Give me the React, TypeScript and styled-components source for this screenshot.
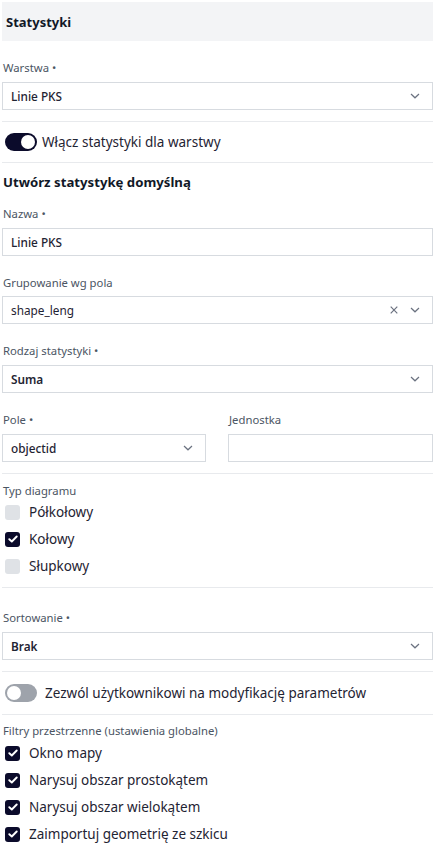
import React from "react";
import styled, { createGlobalStyle } from "styled-components";

const Global = createGlobalStyle`
  html, body { margin: 0; padding: 0; background: #fff; }
  body { font-family: "Segoe UI", "Noto Sans", "Open Sans", sans-serif; color: #1c1f33; }
  * { box-sizing: border-box; }
`;

const Page = styled.div`
  width: 443px;
  padding: 2px 10px 0 2px;
  display: flex;
  flex-direction: column;
`;

const Header = styled.div`
  height: 39px;
  background: #f3f4f6;
  display: flex;
  align-items: center;
  padding-left: 4px;
  font-size: 13px;
  font-weight: 700;
  color: #111827;
`;

const Field = styled.div<{ $mt?: number }>`
  display: flex;
  flex-direction: column;
  margin-top: ${(p) => p.$mt ?? 0}px;
`;

const Label = styled.div<{ $mb?: number }>`
  font-size: 11.3px;
  color: #4b5563;
  height: 18px;
  line-height: 18px;
  padding-left: 1px;
  margin-bottom: ${(p) => p.$mb ?? 5}px;
`;

const Box = styled.div<{ $weight?: number }>`
  height: 28px;
  border: 1px solid #d7dbe0;
  display: flex;
  align-items: center;
  padding: 0 12px 0 8px;
  font-size: 11.8px;
  font-weight: ${(p) => p.$weight ?? 400};
  color: #1f2433;
`;

const BoxText = styled.span`
  flex: 1;
`;

const Divider = styled.div<{ $my: number; $mb?: number }>`
  height: 1px;
  background: #e8eaed;
  margin-top: ${(p) => p.$my}px;
  margin-bottom: ${(p) => p.$mb ?? p.$my}px;
`;

const ToggleRow = styled.div`
  display: flex;
  align-items: center;
  gap: 5px;
  padding-left: 3px;
  height: 20px;
`;

const Track = styled.div<{ $on: boolean }>`
  width: 32px;
  height: 18px;
  border-radius: 9px;
  background: ${(p) => (p.$on ? "#0b0b2b" : "#9ea3ab")};
  display: flex;
  align-items: center;
  justify-content: ${(p) => (p.$on ? "flex-end" : "flex-start")};
  padding: 0 2px;
`;

const Knob = styled.div`
  width: 14px;
  height: 14px;
  border-radius: 50%;
  background: #fff;
`;

const ToggleText = styled.span<{ $gap?: number }>`
  font-size: 13.5px;
  color: #1f2433;
  margin-left: ${(p) => p.$gap ?? 0}px;
`;

const Section = styled.div`
  font-size: 13.2px;
  font-weight: 700;
  color: #111827;
  padding-left: 1px;
  height: 20px;
  line-height: 20px;
`;

const Row2 = styled.div`
  display: grid;
  grid-template-columns: 204px 205px;
  column-gap: 22px;
`;

const CheckList = styled.div`
  display: flex;
  flex-direction: column;
  gap: 7px;
  padding-left: 3px;
`;

const CheckRow = styled.div`
  display: flex;
  align-items: center;
  gap: 9px;
  height: 20px;
`;

const CheckBox = styled.div<{ $on: boolean }>`
  width: 15px;
  height: 15px;
  border-radius: 3px;
  background: ${(p) => (p.$on ? "#0b0b2b" : "#dfe2e6")};
  display: flex;
  align-items: center;
  justify-content: center;
`;

const CheckText = styled.span`
  font-size: 13.5px;
  color: #1f2433;
`;

const Chevron = () => (
  <svg width="10" height="6" viewBox="0 0 10 6" fill="none">
    <path d="M1 1L5 4.8L9 1" stroke="#6b7280" strokeWidth="1.2" />
  </svg>
);

const Cross = () => (
  <svg width="8" height="8" viewBox="0 0 8 8" fill="none" style={{ marginRight: 12 }}>
    <path d="M0.7 0.7L7.3 7.3M7.3 0.7L0.7 7.3" stroke="#6b7280" strokeWidth="1.2" />
  </svg>
);

const Tick = () => (
  <svg width="10" height="8" viewBox="0 0 10 8" fill="none">
    <path d="M1.3 4.2L3.8 6.5L8.7 1.5" stroke="#fff" strokeWidth="1.9" strokeLinecap="round" strokeLinejoin="round" />
  </svg>
);

const Check = ({ on, label }: { on: boolean; label: string }) => (
  <CheckRow>
    <CheckBox $on={on}>{on && <Tick />}</CheckBox>
    <CheckText>{label}</CheckText>
  </CheckRow>
);

export default function App() {
  return (
    <>
      <Global />
      <Page>
        <Header>Statystyki</Header>
        <Field $mt={18}>
          <Label>Warstwa •</Label>
          <Box $weight={500}>
            <BoxText>Linie PKS</BoxText>
            <Chevron />
          </Box>
        </Field>
        <Divider $my={11} $mb={10} />
        <ToggleRow>
          <Track $on>
            <Knob />
          </Track>
          <ToggleText>Włącz statystyki dla warstwy</ToggleText>
        </ToggleRow>
        <Divider $my={10} $mb={9} />
        <Section>Utwórz statystykę domyślną</Section>
        <Field $mt={13}>
          <Label>Nazwa •</Label>
          <Box $weight={500}>
            <BoxText>Linie PKS</BoxText>
          </Box>
        </Field>
        <Field $mt={18}>
          <Label $mb={4}>Grupowanie wg pola</Label>
          <Box>
            <BoxText>shape_leng</BoxText>
            <Cross />
            <Chevron />
          </Box>
        </Field>
        <Field $mt={18}>
          <Label>Rodzaj statystyki •</Label>
          <Box $weight={600}>
            <BoxText>Suma</BoxText>
            <Chevron />
          </Box>
        </Field>
        <Row2>
          <Field $mt={18}>
            <Label>Pole •</Label>
            <Box $weight={500}>
              <BoxText>objectid</BoxText>
              <Chevron />
            </Box>
          </Field>
          <Field $mt={18}>
            <Label>Jednostka</Label>
            <Box />
          </Field>
        </Row2>
        <Divider $my={11} $mb={8} />
        <Label $mb={2}>Typ diagramu</Label>
        <CheckList>
          <Check on={false} label="Półkołowy" />
          <Check on label="Kołowy" />
          <Check on={false} label="Słupkowy" />
        </CheckList>
        <Divider $my={11} $mb={21} />
        <Field>
          <Label>Sortowanie •</Label>
          <Box $weight={600}>
            <BoxText>Brak</BoxText>
            <Chevron />
          </Box>
        </Field>
        <Divider $my={11} $mb={11} />
        <ToggleRow>
          <Track $on={false}>
            <Knob />
          </Track>
          <ToggleText $gap={3}>Zezwól użytkownikowi na modyfikację parametrów</ToggleText>
        </ToggleRow>
        <Divider $my={11} $mb={7} />
        <Label $mb={3}>Filtry przestrzenne (ustawienia globalne)</Label>
        <CheckList>
          <Check on label="Okno mapy" />
          <Check on label="Narysuj obszar prostokątem" />
          <Check on label="Narysuj obszar wielokątem" />
          <Check on label="Zaimportuj geometrię ze szkicu" />
        </CheckList>
      </Page>
    </>
  );
}
